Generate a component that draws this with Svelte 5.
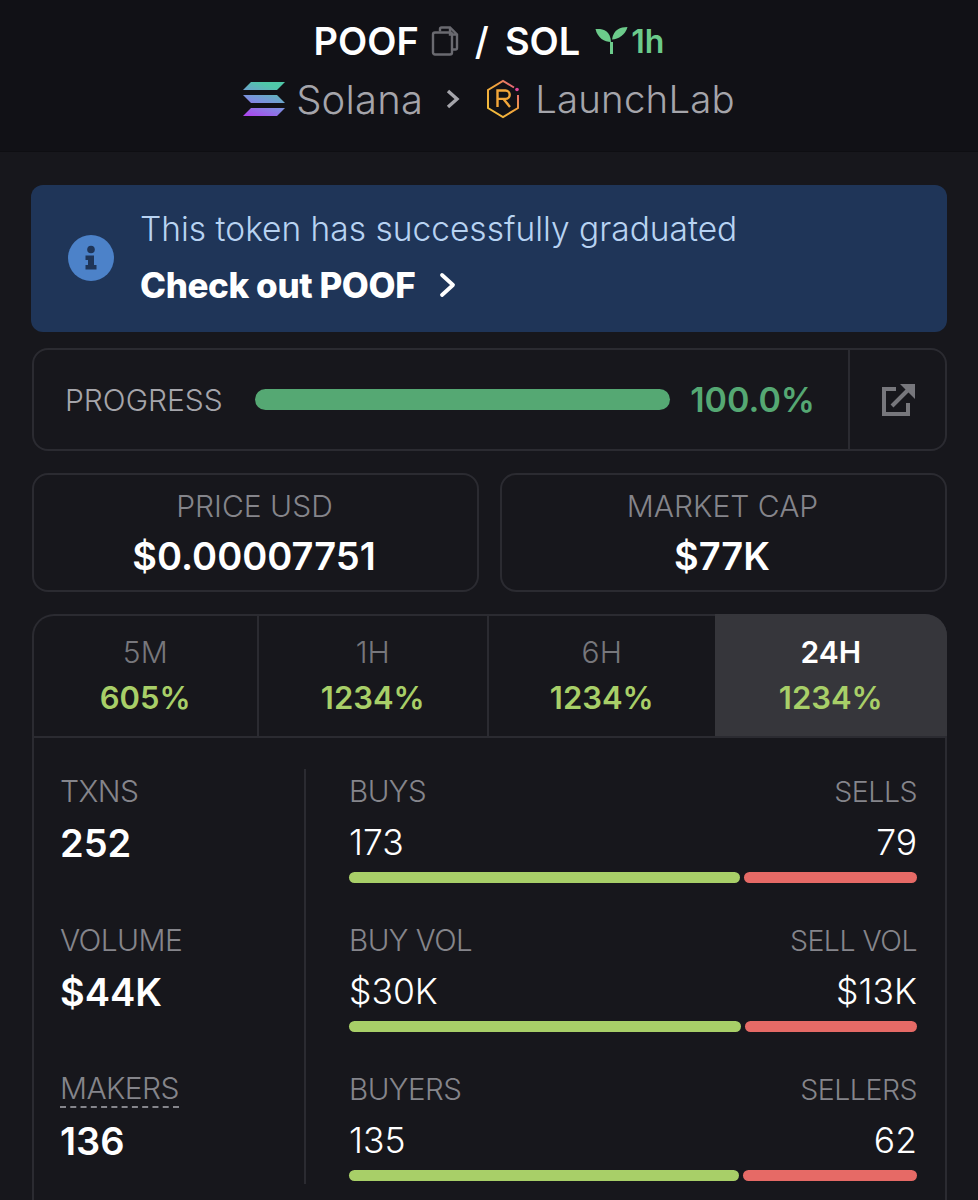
<script lang="ts">
	type Side = { left: string; right: string; leftValue: string; rightValue: string; buy: number };

	const periods = [
		{ label: '5M', change: '605%' },
		{ label: '1H', change: '1234%' },
		{ label: '6H', change: '1234%' },
		{ label: '24H', change: '1234%', active: true }
	];

	const totals = [
		{ label: 'TXNS', value: '252' },
		{ label: 'VOLUME', value: '$44K' },
		{ label: 'MAKERS', value: '136', dashed: true }
	];

	const sides: Side[] = [
		{ left: 'BUYS', right: 'SELLS', leftValue: '173', rightValue: '79', buy: 391 },
		{ left: 'BUY VOL', right: 'SELL VOL', leftValue: '$30K', rightValue: '$13K', buy: 392 },
		{ left: 'BUYERS', right: 'SELLERS', leftValue: '135', rightValue: '62', buy: 390 }
	];
</script>

<header class="top">
	<div class="pair">
		<span>POOF</span>
		<svg class="copy" viewBox="0 0 28 30" width="28" height="30" fill="none" stroke="#6a6a70" stroke-width="2.4">
			<path d="M9 5.500V3a1.500 1.500 0 0 1 1.500-1.500H19l7 7V22a1.500 1.500 0 0 1-1.500 1.500H21" />
			<rect x="2" y="6.500" width="19" height="22" rx="2" />
			<path d="M19 2v6.500h7" />
		</svg>
		<span class="slash">/</span>
		<span>SOL</span>
		<span class="age">
			<svg viewBox="0 0 32 28" width="33" height="28" fill="#6ccb8b">
				<path d="M14.500 27h3V15h-3z" />
				<path d="M0 2c7-.5 15 1 15.500 13C9 15 2 11 0 2z" />
				<path d="M32 0c-7 .2-14 2-15.500 12.500C23 12 30 8 32 0z" />
			</svg>
			1h
		</span>
	</div>
	<div class="path">
		<svg viewBox="0 0 42 34" width="42" height="34">
			<defs>
				<linearGradient id="sol" x1="0" y1="1" x2="0.400" y2="0">
					<stop offset="0" stop-color="#b13ff0" />
					<stop offset="0.5" stop-color="#7d8fe0" />
					<stop offset="1" stop-color="#4fc8a8" />
				</linearGradient>
			</defs>
			<path fill="url(#sol)" d="M8 0h34l-8 8H0zM0 13h34l8 8H8zM8 26h34l-8 8H0z" />
		</svg>
		<span class="chain">Solana</span>
		<svg class="crumb" viewBox="0 0 14 20" width="14" height="20" fill="none" stroke="#a5a5ab" stroke-width="3.400">
			<path d="M2 2l9 8-9 8" />
		</svg>
		<svg viewBox="0 0 34 40" width="34" height="40" fill="none" stroke-width="2">
			<defs>
				<linearGradient id="ray" x1="0" y1="1" x2="1" y2="0">
					<stop offset="0" stop-color="#f3c23c" />
					<stop offset="0.6" stop-color="#f0a03c" />
					<stop offset="1" stop-color="#e0449a" />
				</linearGradient>
			</defs>
			<path stroke="url(#ray)" d="M32 16v13l-15 9-15-9V11l15-9 11 6.500" />
			<path stroke="#f2a63a" stroke-width="2.400" d="M11.500 28V11.500h8a4.200 4.200 0 0 1 0 8.400h-8M17.500 20l6.500 8" />
			<circle cx="31" cy="10.500" r="1.800" fill="#e0449a" />
		</svg>
		<span class="launchpad">LaunchLab</span>
	</div>
</header>

<main class="page">
	<section class="notice">
		<span class="info">
			<svg viewBox="0 0 46 46" width="46" height="46">
				<circle cx="23" cy="23" r="23" fill="#4c82c9" />
				<circle cx="23" cy="14.500" r="3.800" fill="#1f3558" />
				<path fill="#1f3558" d="M17.500 20.500H26V30h2.500v4.500H17.500V30H20v-5h-2.500z" />
			</svg>
		</span>
		<div class="notice-text">
			<p>This token has successfully graduated</p>
			<a href="#poof">
				Check out POOF
				<svg viewBox="0 0 18 26" width="18" height="26" fill="none" stroke="#fff" stroke-width="3.800" stroke-linecap="round" stroke-linejoin="round">
					<path d="M3 3l11 10L3 23" />
				</svg>
			</a>
		</div>
	</section>

	<section class="progress">
		<div class="progress-main">
			<span class="progress-label">PROGRESS</span>
			<span class="track"></span>
			<span class="percent">100.0%</span>
		</div>
		<span class="external">
			<svg viewBox="0 0 34 34" width="34" height="34" fill="none" stroke="#77777c" stroke-width="4">
				<path d="M15 6H3v25h24V20" />
				<path d="M11 23 29 5" />
				<path fill="#77777c" stroke="none" d="M19 1h15v15z" />
			</svg>
		</span>
	</section>

	<section class="stats">
		<div class="stat">
			<span>PRICE USD</span>
			<strong>$0.00007751</strong>
		</div>
		<div class="stat">
			<span>MARKET CAP</span>
			<strong>$77K</strong>
		</div>
	</section>

	<section class="panel">
		<div class="tabs">
			{#each periods as p}
				<div class="tab" class:active={p.active}>
					<span>{p.label}</span>
					<strong>{p.change}</strong>
				</div>
			{/each}
		</div>
		<div class="body">
			<div class="totals">
				{#each totals as t}
					<div class="total">
						<span class:dashed={t.dashed}>{t.label}</span>
						<strong>{t.value}</strong>
					</div>
				{/each}
			</div>
			<div class="sides">
				{#each sides as s}
					<div class="side">
						<div class="row labels"><span>{s.left}</span><span class="right">{s.right}</span></div>
						<div class="row values"><span>{s.leftValue}</span><span>{s.rightValue}</span></div>
						<div class="bars">
							<span class="buy" style="width:{s.buy}px"></span>
							<span class="sell"></span>
						</div>
					</div>
				{/each}
			</div>
		</div>
	</section>
</main>

<style>
	:global(body) {
		margin: 0;
		background: #17171c;
		color: #fff;
		font-family: Inter, "Liberation Sans", sans-serif;
		height: 1200px;
		overflow: hidden;
	}

	.top {
		height: 152px;
		box-sizing: border-box;
		background: #111116;
		border-bottom: 1px solid #0e0e12;
		padding-top: 17px;
		display: flex;
		flex-direction: column;
		align-items: center;
		gap: 10px;
	}

	.pair {
		height: 48px;
		display: flex;
		align-items: center;
		font-size: 38px;
		font-weight: 600;
	}

	.copy {
		margin-left: 12px;
	}

	.slash {
		margin: 0 16px;
		font-weight: 500;
	}

	.age {
		display: flex;
		align-items: center;
		gap: 3px;
		margin-left: 15px;
		color: #6ccb8b;
		font-size: 32px;
	}

	.path {
		height: 48px;
		display: flex;
		align-items: center;
		color: #a5a5ab;
		font-size: 38.4px;
		font-weight: 300;
		letter-spacing: 0.2px;
	}

	.chain {
		margin-left: 11px;
		font-size: 40px;
	}

	.crumb {
		margin: 0 26px 0 23px;
	}

	.launchpad {
		margin-left: 15px;
	}

	.page {
		padding: 33px 31px 0;
		display: flex;
		flex-direction: column;
	}

	.notice {
		height: 147px;
		box-sizing: border-box;
		background: #1f3558;
		border-radius: 12px;
		display: flex;
		align-items: center;
		gap: 26px;
		padding-left: 37px;
	}

	.info {
		display: flex;
		margin-top: -2px;
	}

	.notice-text {
		margin-top: -4px;
	}

	.notice p {
		margin: 0 0 16px;
		color: #b8d3f2;
		font-size: 33.5px;
		font-weight: 300;
		line-height: 40px;
	}

	.notice a {
		display: flex;
		align-items: center;
		gap: 24px;
		color: #fff;
		font-size: 35px;
		font-weight: 800;
		line-height: 40px;
		text-decoration: none;
		letter-spacing: -0.4px;
	}

	.progress {
		height: 103px;
		box-sizing: border-box;
		margin: 16px 0 0 1px;
		border: 2px solid #2b2b31;
		border-radius: 16px;
		display: flex;
	}

	.progress-main {
		flex: 1;
		display: flex;
		align-items: center;
		padding-left: 31px;
		padding-right: 33px;
	}

	.progress-label {
		width: 190px;
		color: #a5a5ab;
		font-size: 30px;
		font-weight: 300;
	}

	.track {
		flex: 1;
		height: 21px;
		border-radius: 11px;
		background: #55a873;
	}

	.percent {
		margin-left: 20px;
		color: #55a873;
		font-size: 34px;
		font-weight: 600;
	}

	.external {
		width: 95px;
		border-left: 2px solid #2b2b31;
		display: flex;
		align-items: center;
		justify-content: center;
	}

	.stats {
		margin: 22px 0 0 1px;
		display: grid;
		grid-template-columns: 1fr 1fr;
		gap: 21px;
	}

	.stat {
		height: 119px;
		box-sizing: border-box;
		border: 2px solid #2b2b31;
		border-radius: 16px;
		display: flex;
		flex-direction: column;
		align-items: center;
		padding-top: 12px;
	}

	.stat span {
		color: #85858b;
		font-size: 30px;
		font-weight: 300;
		line-height: 38px;
		padding-right: 2px;
	}

	.stat strong {
		font-size: 38px;
		font-weight: 600;
		line-height: 46px;
		margin-top: 8px;
		padding-right: 3px;
	}

	.panel {
		margin: 22px 0 0 1px;
		border: 2px solid #2b2b31;
		border-bottom: 0;
		border-radius: 22px 22px 0 0;
	}

	.tabs {
		display: grid;
		grid-template-columns: 223fr 231fr 228fr 231fr;
		border-bottom: 2px solid #2b2b31;
	}

	.tab {
		height: 120px;
		box-sizing: border-box;
		display: flex;
		flex-direction: column;
		align-items: center;
		padding-top: 17px;
		border-left: 2px solid #2b2b31;
	}

	.tab:first-child {
		border-left: 0;
	}

	.tab span {
		color: #77777c;
		font-size: 30px;
		font-weight: 300;
		line-height: 38px;
	}

	.tab strong {
		margin-top: 7px;
		color: #a8cf68;
		font-size: 31px;
		font-weight: 600;
		line-height: 40px;
	}

	.tab.active {
		height: 122px;
		margin: -2px -2px 0 0;
		padding-top: 19px;
		background: #36363b;
		border-left: 0;
		border-radius: 0 22px 0 0;
	}

	.tab.active span {
		color: #fff;
		font-weight: 600;
	}

	.body {
		display: flex;
		padding: 31px 28px 0 26px;
	}

	.totals {
		width: 246px;
		height: 415px;
		padding-top: 4px;
		box-sizing: border-box;
		border-right: 2px solid #2b2b31;
		flex: none;
	}

	.total {
		height: 149px;
	}

	.total span {
		display: inline-block;
		color: #85858b;
		font-size: 30px;
		font-weight: 300;
		line-height: 36px;
		letter-spacing: -0.6px;
	}

	.total span.dashed {
		line-height: 35px;
		border-bottom: 2px dashed #85858b;
		margin-bottom: -1px;
	}

	.total strong {
		display: block;
		margin-top: 11px;
		font-size: 38px;
		font-weight: 600;
		line-height: 46px;
	}

	.sides {
		flex: 1;
		padding: 4px 0 0 43px;
	}

	.side {
		height: 149px;
	}

	.row {
		display: flex;
		justify-content: space-between;
		align-items: baseline;
	}

	.labels {
		color: #85858b;
		font-size: 29.5px;
		font-weight: 300;
		line-height: 36px;
		letter-spacing: -0.5px;
	}

	.labels .right {
		font-size: 28.5px;
	}

	.values {
		margin-top: 11px;
		font-size: 35.5px;
		font-weight: 300;
		line-height: 44px;
	}

	.bars {
		margin-top: 7px;
		display: flex;
		gap: 4px;
	}

	.bars span {
		height: 11px;
		border-radius: 6px;
	}

	.buy {
		background: #a8cf68;
	}

	.sell {
		flex: 1;
		background: #e66a66;
	}
</style>
